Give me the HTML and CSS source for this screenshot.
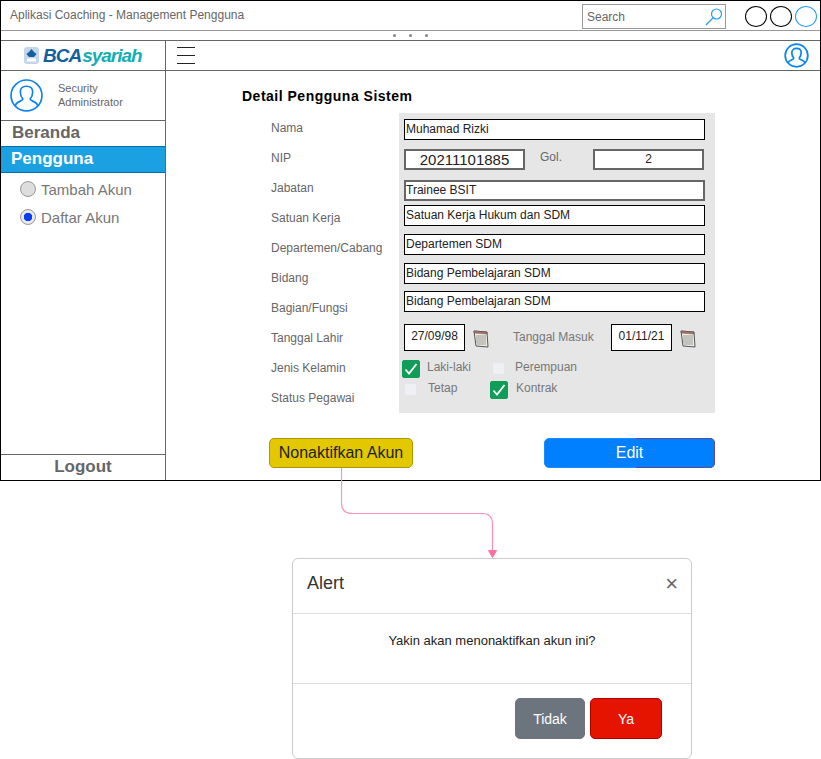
FILE: index.html
```html
<!DOCTYPE html>
<html lang="id">
<head>
  <meta charset="UTF-8">
  <meta name="viewport" content="width=device-width, initial-scale=1.0">
  <title>Management Pengguna</title>
  <link rel="stylesheet" href="styles.css">
</head>
<body>
  <div class="page">
    <div class="frame">
      <div class="titlebar">
        <span class="app-title">Aplikasi Coaching - Management Pengguna</span>
        <div class="search">
          <span>Search</span>
          <svg width="20" height="20" viewBox="0 0 20 20" fill="none" stroke="#2b9bf0" stroke-width="1.2"><circle cx="12.5" cy="7" r="5"/><path d="M9 11 L2 18"/></svg>
        </div>
        <div class="win-buttons">
          <span class="win-btn"></span>
          <span class="win-btn"></span>
          <span class="win-btn blue"></span>
        </div>
      </div>
      <div class="strip"><i></i><i></i><i></i></div>
      <div class="topbar">
        <div class="logo">
          <svg width="15" height="17" viewBox="0 0 15 17"><rect width="15" height="17" rx="3" fill="#c6d6ea"/><path d="M7.5 2 L10 5 L12.500 7 L10 10 H5 L2.500 7 L5 5 Z" fill="#14609f"/><rect x="3" y="11.500" width="9" height="3" fill="#fff"/></svg>
          <span class="logo-bca">BCA</span><span class="logo-syariah">syariah</span>
        </div>
        <div class="topbar-main">
          <div class="burger"><i></i><i></i><i></i></div>
          <svg class="user-icon" width="25" height="25" viewBox="0 0 32 32" fill="none" stroke="#0a84f0" stroke-width="2.200"><circle cx="16" cy="16" r="14.500"/><path d="M5.500 26 V25 C6 22 12.500 21.500 12.500 19.500 C10.500 17 10 15 10 12.500 C10 9 12.500 7 16 7 C19.500 7 22 9 22 12.500 C22 15 21.500 17 19.500 19.500 C19.500 21.500 26 22 26.500 25 V26"/></svg>
        </div>
      </div>
      <div class="body-row">
        <aside class="sidebar">
          <div class="profile">
            <svg width="33" height="33" viewBox="0 0 32 32" fill="none" stroke="#0a84f0" stroke-width="1.600"><circle cx="16" cy="16" r="15"/><path d="M5.500 26 V25 C6 22 12.500 21.500 12.500 19.500 C10.500 17 10 15 10 12.500 C10 9 12.500 7 16 7 C19.500 7 22 9 22 12.500 C22 15 21.500 17 19.500 19.500 C19.500 21.500 26 22 26.500 25 V26"/></svg>
            <div class="profile-text">Security<br>Administrator</div>
          </div>
          <div class="nav-item">Beranda</div>
          <div class="nav-item active">Pengguna</div>
          <div class="radio-item"><span class="radio"></span>Tambah Akun</div>
          <div class="radio-item"><span class="radio checked"></span>Daftar Akun</div>
          <div class="logout">Logout</div>
        </aside>
        <main class="content">
          <h1>Detail Pengguna Sistem</h1>
          <div class="form">
            <div class="labels">
              <div>Nama</div>
              <div>NIP</div>
              <div>Jabatan</div>
              <div>Satuan Kerja</div>
              <div>Departemen/Cabang</div>
              <div>Bidang</div>
              <div>Bagian/Fungsi</div>
              <div>Tanggal Lahir</div>
              <div>Jenis Kelamin</div>
              <div>Status Pegawai</div>
            </div>
            <div class="panel">
              <div class="field f-nama">Muhamad Rizki</div>
              <div class="nip-row">
                <div class="field gray nip">20211101885</div>
                <span class="gol">Gol.</span>
                <div class="field gray golval">2</div>
              </div>
              <div class="field gray f-jabatan">Trainee BSIT</div>
              <div class="field f-satuan">Satuan Kerja Hukum dan SDM</div>
              <div class="field f-dept">Departemen SDM</div>
              <div class="field f-bidang">Bidang Pembelajaran SDM</div>
              <div class="field f-bagian">Bidang Pembelajaran SDM</div>
              <div class="date-row">
                <div class="date">27/09/98</div>
                <svg class="cal" width="16" height="20" viewBox="0 0 16 20"><path d="M1 3 L14 4 L15 19 L3 18 Z" fill="#efebe3" stroke="#555"/><path d="M1 3 L14 4 L14 6 L1 5 Z" fill="#b5705f" stroke="#555" stroke-width=".5"/><path d="M3 8 H13 M3 10 H13 M3 12 H13 M3 14 H13 M4 16 H13" stroke="#999"/></svg>
                <span class="masuk">Tanggal Masuk</span>
                <div class="date">01/11/21</div>
                <svg class="cal" width="16" height="20" viewBox="0 0 16 20"><path d="M1 3 L14 4 L15 19 L3 18 Z" fill="#efebe3" stroke="#555"/><path d="M1 3 L14 4 L14 6 L1 5 Z" fill="#b5705f" stroke="#555" stroke-width=".5"/><path d="M3 8 H13 M3 10 H13 M3 12 H13 M3 14 H13 M4 16 H13" stroke="#999"/></svg>
              </div>
              <div class="check-grid">
                <span class="check on"><svg width="14" height="12" viewBox="0 0 14 12" fill="none" stroke="#fff" stroke-width="1.800"><path d="M1.500 6.500 L5 10.500 L12.500 1"/></svg></span>
                <span class="check-label narrow">Laki-laki</span>
                <span class="check"></span>
                <span class="check-label narrow">Perempuan</span>
                <span class="check"></span>
                <span class="check-label">Tetap</span>
                <span class="check on"><svg width="14" height="12" viewBox="0 0 14 12" fill="none" stroke="#fff" stroke-width="1.800"><path d="M1.500 6.500 L5 10.500 L12.500 1"/></svg></span>
                <span class="check-label">Kontrak</span>
              </div>
            </div>
          </div>
          <div class="actions">
            <button class="btn-yellow">Nonaktifkan Akun</button>
            <button class="btn-edit">Edit</button>
          </div>
        </main>
      </div>
    </div>

    <svg class="connector" width="170" height="92" viewBox="0 0 170 92" fill="none">
      <path d="M0.500 0 V35 Q0.500 45.500 11 45.500 H141 Q151.500 45.500 151.500 56 V83" stroke="#ff8fb3" stroke-width="1.200"/>
      <path d="M147.500 82.500 H155.500 L151.500 89.500 Z" fill="#ff6f9f" stroke="#ff6f9f"/>
    </svg>

    <div class="modal">
      <div class="modal-head">
        <span>Alert</span>
        <span class="close">&times;</span>
      </div>
      <div class="modal-body">Yakin akan menonaktifkan akun ini?</div>
      <div class="modal-foot">
        <button class="btn-gray">Tidak</button>
        <button class="btn-red">Ya</button>
      </div>
    </div>
  </div>
</body>
</html>
```

FILE: styles.css
```css
* {
  box-sizing: border-box;
}
body {
  margin: 0;
  font-family: "Liberation Sans", Arial, sans-serif;
  background-color: #fff;
  overflow: hidden;
}
.page {
  position: relative;
  width: 821px;
  height: 759px;
}
.frame {
  height: 481px;
  border: 1px solid #000;
  display: flex;
  flex-direction: column;
}
.titlebar {
  height: 30px;
  display: flex;
  align-items: flex-start;
  padding-top: 2px;
  border-bottom: 1px solid #999;
}
.app-title {
  margin: 5px 0 0 9px;
  font-size: 12px;
  color: #666;
  flex: 1;
}
.search {
  width: 144px;
  height: 25px;
  margin-top: 1px;
  border: 1px solid #999;
  display: flex;
  align-items: center;
  justify-content: space-between;
  padding: 1px 1px 0 4px;
  font-size: 12px;
  color: #666;
}
.win-buttons {
  display: flex;
  width: 75px;
  margin: 3px 0 0 19px;
  gap: 1px;
}
.win-btn {
  width: 22px;
  height: 21px;
  border: 1px solid #000;
  border-radius: 50%;
  margin-right: 2px;
}
.win-btn.blue {
  border-color: #2b9bf0;
}
.strip {
  height: 10px;
  display: flex;
  justify-content: center;
  align-items: center;
  gap: 13px;
  border-bottom: 1px solid #666;
}
.strip i {
  width: 3px;
  height: 3px;
  border-radius: 50%;
  background-color: #888;
}
.topbar {
  height: 30px;
  display: flex;
  border-bottom: 1px solid #666;
}
.logo {
  width: 165px;
  border-right: 1px solid #666;
  display: flex;
  align-items: center;
  padding-left: 23px;
  font-size: 19px;
  font-weight: bold;
  font-style: italic;
}
.logo svg {
  margin-right: 4px;
}
.logo-bca {
  color: #14609f;
  letter-spacing: -1px;
}
.logo-syariah {
  color: #14aeb5;
  letter-spacing: -1px;
  margin-left: 1px;
}
.topbar-main {
  flex: 1;
  display: flex;
  align-items: center;
  justify-content: space-between;
  padding: 0 11px 0 11px;
}
.burger {
  width: 18px;
  display: flex;
  flex-direction: column;
  gap: 7px;
}
.burger i {
  height: 1px;
  background-color: #222;
}
.body-row {
  flex: 1;
  display: flex;
  min-height: 0;
}
.sidebar {
  width: 165px;
  border-right: 1px solid #666;
  display: flex;
  flex-direction: column;
}
.profile {
  height: 50px;
  display: flex;
  align-items: center;
  padding-left: 9px;
  border-bottom: 1px solid #666;
}
.profile-text {
  margin: -2px 0 0 15px;
  font-size: 11px;
  line-height: 14px;
  color: #666;
}
.nav-item {
  height: 25px;
  padding-left: 11px;
  font-size: 17px;
  font-weight: bold;
  line-height: 23px;
  color: #666;
}
.nav-item.active {
  height: 27px;
  padding-left: 10px;
  background-color: #1ba1e2;
  border-top: 1px solid #006eaf;
  border-bottom: 1px solid #006eaf;
  color: #fff;
}
.radio-item {
  height: 28px;
  display: flex;
  align-items: center;
  padding-left: 19px;
  font-size: 15px;
  color: #777;
}
.radio-item:nth-child(4) {
  margin-top: 2px;
}
.radio {
  width: 16px;
  height: 16px;
  margin-right: 5px;
  border: 1px solid #999;
  border-radius: 50%;
  background-color: #ddd;
}
.radio.checked {
  background: radial-gradient(circle, #0a3cf0 0 4px, #e8e8e8 4.500px);
}
.logout {
  margin-top: auto;
  height: 26px;
  border-top: 1px solid #666;
  text-align: center;
  font-size: 17px;
  font-weight: bold;
  line-height: 24px;
  color: #666;
}
.content {
  flex: 1;
  padding: 17px 0 0 76px;
}
h1 {
  margin: 0 0 9px;
  font-size: 14px;
  line-height: 16px;
  letter-spacing: 0.5px;
  color: #000;
}
.form {
  display: flex;
  margin-left: 29px;
}
.labels {
  width: 128px;
  font-size: 12px;
  color: #666;
}
.labels div {
  height: 30px;
  line-height: 30px;
}
.panel {
  width: 316px;
  height: 300px;
  background-color: #e6e6e6;
  padding: 6px 10px 0 5px;
  font-size: 12px;
}
.field {
  height: 21px;
  border: 1px solid #000;
  background-color: #fff;
  padding-left: 1px;
  line-height: 19px;
  color: #222;
}
.field.gray {
  border: 2px solid #666;
  padding-left: 0;
  line-height: 17px;
}
.nip-row {
  display: flex;
  margin-top: 9px;
  height: 22px;
}
.nip {
  width: 121px;
  height: 21px;
  text-align: center;
  font-size: 15px;
}
.gol {
  width: 68px;
  padding-left: 15px;
  color: #666;
  line-height: 16px;
}
.golval {
  width: 111px;
  height: 21px;
  text-align: center;
}
.f-jabatan {
  margin-top: 9px;
}
.f-satuan {
  margin-top: 4px;
}
.f-dept,
.f-bidang {
  margin-top: 8px;
}
.f-bagian {
  margin-top: 7px;
}
.date-row {
  display: flex;
  align-items: center;
  margin-top: 12px;
}
.date {
  width: 61px;
  height: 27px;
  border: 1px solid #000;
  background-color: #fff;
  text-align: center;
  line-height: 22px;
  color: #222;
}
.cal {
  margin-left: 8px;
}
.masuk {
  width: 98px;
  margin-left: 24px;
  padding-bottom: 2px;
  color: #777;
}
.check-grid {
  display: grid;
  grid-template-columns: 18px 70px 18px auto;
  grid-auto-rows: 21px;
  align-items: center;
  margin: 7px 0 0 -2px;
}
.check {
  width: 13px;
  height: 13px;
  margin-left: 2px;
  border-radius: 2px;
  background-color: #eef0f4;
  border: 1px solid #e4e6ea;
  display: flex;
  align-items: center;
  justify-content: center;
}
.check.on {
  width: 18px;
  height: 18px;
  margin-left: 0;
  background-color: #0f9d58;
  border-color: #0f9d58;
}
.check-label {
  padding: 0 0 3px 8px;
  color: #777;
}
.check-label.narrow {
  padding-left: 7px;
}
.actions {
  display: flex;
  justify-content: space-between;
  width: 446px;
  margin: 25px 0 0 27px;
}
.btn-yellow {
  width: 144px;
  height: 30px;
  padding: 0;
  font: 16px "Liberation Sans", Arial, sans-serif;
  color: #222;
  background-color: #e3c800;
  border: 1px solid #b09500;
  border-radius: 5px;
}
.btn-edit {
  position: relative;
  width: 171px;
  height: 30px;
  padding: 0;
  font: 16px "Liberation Sans", Arial, sans-serif;
  color: #fff;
  background-color: #007fff;
  border: 1px solid #1a8cff;
  border-radius: 5px;
}
.btn-edit::after {
  content: "";
  position: absolute;
  top: -1px;
  right: -1px;
  bottom: -1px;
  width: 78px;
  border: 1px solid #5a4a9a;
  border-left: 0;
  border-radius: 0 5px 5px 0;
}
.connector {
  position: absolute;
  left: 341px;
  top: 468px;
}
.modal {
  position: absolute;
  left: 292px;
  top: 558px;
  width: 400px;
  height: 201px;
  border: 1px solid #ccc;
  border-radius: 6px;
  background-color: #fff;
  display: flex;
  flex-direction: column;
}
.modal-head {
  height: 55px;
  border-bottom: 1px solid #ddd;
  display: flex;
  align-items: center;
  justify-content: space-between;
  padding: 0 13px 5px 14px;
  font-size: 18px;
  color: #333;
}
.close {
  font-size: 22px;
  color: #666;
}
.modal-body {
  height: 70px;
  padding-top: 19px;
  border-bottom: 1px solid #ddd;
  text-align: center;
  font-size: 13px;
  line-height: 16px;
  color: #222;
}
.modal-foot {
  flex: 1;
  display: flex;
  justify-content: flex-end;
  align-items: flex-start;
  gap: 5px;
  padding: 14px 29px 0 0;
}
.modal-foot button {
  height: 41px;
  padding: 0;
  border-radius: 5px;
  font: 14px "Liberation Sans", Arial, sans-serif;
  color: #fff;
}
.btn-gray {
  width: 70px;
  background-color: #6c757d;
  border: 1px solid #6c757d;
}
.btn-red {
  width: 72px;
  background-color: #e51400;
  border: 1px solid #b20000;
}
```
